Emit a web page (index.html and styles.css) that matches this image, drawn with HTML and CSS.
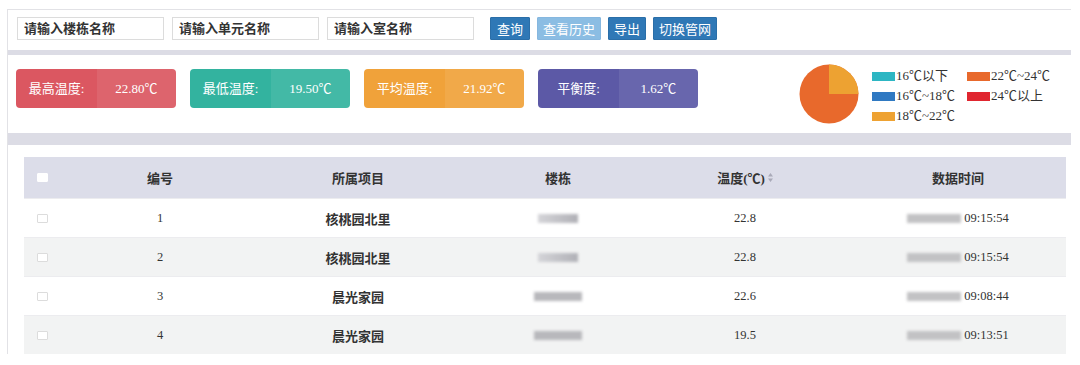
FILE: index.html
```html
<!DOCTYPE html>
<html lang="zh-CN">
<head>
  <meta charset="UTF-8">
  <title>温度监测</title>
  <link rel="stylesheet" href="styles.css">
</head>
<body>
  <div class="frame">
    <div class="toolbar">
      <input class="search" type="text" placeholder="请输入楼栋名称">
      <input class="search" type="text" placeholder="请输入单元名称">
      <input class="search" type="text" placeholder="请输入室名称">
      <div class="actions">
        <button class="btn btn-query">查询</button>
        <button class="btn btn-light">查看历史</button>
        <button class="btn">导出</button>
        <button class="btn">切换管网</button>
      </div>
    </div>

    <div class="band"></div>

    <div class="stats">
      <div class="card card-red">
        <span class="card-label">最高温度:</span>
        <span class="card-value">22.80℃</span>
      </div>
      <div class="card card-teal">
        <span class="card-label">最低温度:</span>
        <span class="card-value">19.50℃</span>
      </div>
      <div class="card card-orange">
        <span class="card-label">平均温度:</span>
        <span class="card-value">21.92℃</span>
      </div>
      <div class="card card-purple">
        <span class="card-label">平衡度:</span>
        <span class="card-value">1.62℃</span>
      </div>

      <svg class="pie" width="60" height="60" viewBox="0 0 60 60">
        <circle cx="30" cy="30" r="29.5" fill="#e8692c"/>
        <path d="M30 30 L30 0.5 A29.5 29.5 0 0 1 59.5 30 Z" fill="#eda232"/>
      </svg>

      <div class="legend">
        <div class="legend-item"><i class="sw sw-teal"></i>16℃以下</div>
        <div class="legend-item"><i class="sw sw-orange"></i>22℃~24℃</div>
        <div class="legend-item"><i class="sw sw-blue"></i>16℃~18℃</div>
        <div class="legend-item"><i class="sw sw-red"></i>24℃以上</div>
        <div class="legend-item"><i class="sw sw-yellow"></i>18℃~22℃</div>
      </div>
    </div>

    <div class="band band-thick"></div>

    <div class="table-wrap">
      <div class="table">
        <div class="row head">
          <div class="cell"><span class="check check-head"></span></div>
          <div class="cell">编号</div>
          <div class="cell">所属项目</div>
          <div class="cell">楼栋</div>
          <div class="cell">温度(℃)
            <svg class="sort" width="5" height="9" viewBox="0 0 5 9"><path d="M2.5 0 L5 3.5 H0 Z M2.5 9 L5 5.5 H0 Z" fill="#a9aab8"/></svg>
          </div>
          <div class="cell cell-time">数据时间</div>
        </div>

        <div class="row">
          <div class="cell"><span class="check"></span></div>
          <div class="cell num">1</div>
          <div class="cell name">核桃园北里</div>
          <div class="cell"><span class="blur blur-short"></span></div>
          <div class="cell num">22.8</div>
          <div class="cell cell-time num"><span class="blur blur-date"></span>09:15:54</div>
        </div>

        <div class="row alt">
          <div class="cell"><span class="check"></span></div>
          <div class="cell num">2</div>
          <div class="cell name">核桃园北里</div>
          <div class="cell"><span class="blur blur-short"></span></div>
          <div class="cell num">22.8</div>
          <div class="cell cell-time num"><span class="blur blur-date"></span>09:15:54</div>
        </div>

        <div class="row">
          <div class="cell"><span class="check"></span></div>
          <div class="cell num">3</div>
          <div class="cell name">晨光家园</div>
          <div class="cell"><span class="blur"></span></div>
          <div class="cell num">22.6</div>
          <div class="cell cell-time num"><span class="blur blur-date"></span>09:08:44</div>
        </div>

        <div class="row alt">
          <div class="cell"><span class="check"></span></div>
          <div class="cell num">4</div>
          <div class="cell name">晨光家园</div>
          <div class="cell"><span class="blur"></span></div>
          <div class="cell num">19.5</div>
          <div class="cell cell-time num"><span class="blur blur-date"></span>09:13:51</div>
        </div>
      </div>
    </div>
  </div>
</body>
</html>
```

FILE: styles.css
```css
body {
  margin: 0;
  background: #fff;
  color: #333;
  font-family: "Liberation Serif", "Noto Sans CJK SC", serif;
  font-size: 13px;
}

.frame {
  width: 1064px;
  margin: 9px 0 0 7px;
  border-top: 1px solid #e2e2e6;
  border-left: 1px solid #e2e2e6;
  box-sizing: border-box;
}

/* 顶部查询栏 */
.toolbar {
  display: flex;
  align-items: center;
  gap: 8px;
  height: 40px;
  padding: 0 0 3px 9px;
  box-sizing: border-box;
}

.search {
  width: 147px;
  height: 23px;
  box-sizing: border-box;
  border: 1px solid #dcdcdc;
  padding: 0 6px;
  font-family: inherit;
  font-size: 13px;
  font-weight: bold;
  color: #333;
  outline: none;
}

.search::placeholder {
  color: #333;
}

.actions {
  display: flex;
  gap: 7px;
  margin-left: 8px;
}

.btn {
  height: 23px;
  padding: 0 5px;
  border: 1px solid #2a6ea8;
  background: #2f78b6;
  color: #fff;
  font-family: inherit;
  font-size: 13px;
  border-radius: 1px;
  cursor: pointer;
}

.btn-query {
  padding: 0 6px;
}

.btn-light {
  background: #8bbde3;
  border-color: #86b7df;
}

.band {
  height: 5px;
  background: #dcdce5;
}

.band-thick {
  height: 12px;
}

/* 统计卡片 */
.stats {
  display: flex;
  align-items: flex-start;
  gap: 14px;
  height: 78px;
  padding: 14px 0 0 8px;
  box-sizing: border-box;
}

.card {
  display: flex;
  width: 160px;
  height: 39px;
  border-radius: 4px;
  overflow: hidden;
  color: #fff;
  line-height: 39px;
}

.card-label {
  width: 81px;
  text-align: center;
}

.card-value {
  flex: 1;
  text-align: center;
  background: rgba(255, 255, 255, 0.08);
}

.card-red { background: #db5761; }
.card-teal { background: #33b39f; }
.card-orange { background: #f0a23a; }
.card-purple { background: #5c59a6; }

.pie {
  margin: -5px 0 0 87px;
}

.legend {
  display: grid;
  grid-template-columns: 95px auto;
  margin: -3px 0 0 -1px;
  line-height: 20px;
  font-size: 13px;
  color: #333;
}

.legend-item {
  display: flex;
  align-items: center;
}

.sw {
  display: inline-block;
  width: 23px;
  height: 9px;
  margin-right: 1px;
}

.sw-teal { background: #2db6c3; }
.sw-blue { background: #2f79c2; }
.sw-yellow { background: #eea232; }
.sw-orange { background: #e8692c; }
.sw-red { background: #e0262f; }

/* 数据表格 */
.table-wrap {
  padding: 12px 0 0 16px;
}

.table {
  width: 1042px;
}

.row {
  display: grid;
  grid-template-columns: 36px 200px 196px 204px 170px 236px;
  height: 39px;
  align-items: center;
  border-top: 1px solid #ececef;
  box-sizing: border-box;
}

.row.head {
  height: 41px;
  background: #dcdde9;
  border-top: none;
  font-weight: bold;
}

.row.alt {
  background: #f2f3f3;
}

.cell {
  display: flex;
  align-items: center;
  justify-content: center;
}

.cell-time {
  padding-left: 20px;
}

.name {
  font-weight: bold;
}

.num {
  font-size: 12.5px;
}

.sort {
  margin-left: 3px;
}

.check {
  width: 9px;
  height: 7px;
  border: 1px solid #dcdcdc;
  border-radius: 1px;
  background: #fff;
}

.check-head {
  border-color: #fff;
}

.blur {
  display: inline-block;
  width: 48px;
  height: 9px;
  background: #b8b8bc;
  filter: blur(1.5px);
}

.blur-short {
  width: 40px;
  background: linear-gradient(90deg, #d4d4d8, #b0b0b6);
}

.blur-date {
  width: 54px;
  margin-right: 3px;
  background: #c2c2c4;
}
```
